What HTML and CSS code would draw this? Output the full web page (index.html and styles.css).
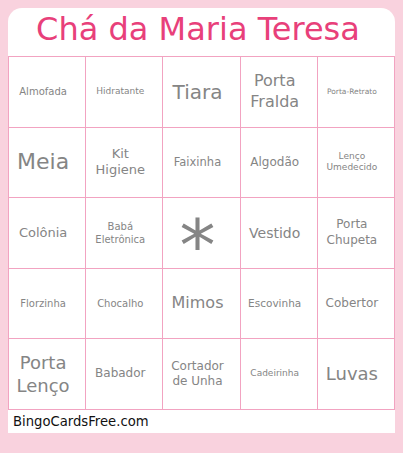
FILE: index.html
```html
<!DOCTYPE html>
<html lang="pt">
<head>
<meta charset="utf-8">
<title>Chá da Maria Teresa</title>
<link rel="stylesheet" href="styles.css">
</head>
<body>
<div class="card">
  <h1 class="title">Chá da Maria Teresa</h1>
  <div class="grid">
    <div class="cell s10">Almofada</div>
    <div class="cell s9">Hidratante</div>
    <div class="cell s20">Tiara</div>
    <div class="cell s16">Porta<br>Fralda</div>
    <div class="cell s7">Porta-Retrato</div>

    <div class="cell s22">Meia</div>
    <div class="cell s13">Kit<br>Higiene</div>
    <div class="cell s115">Faixinha</div>
    <div class="cell s12">Algodão</div>
    <div class="cell s9">Lenço<br>Umedecido</div>

    <div class="cell s13">Colônia</div>
    <div class="cell s10">Babá<br>Eletrônica</div>
    <div class="cell free">*</div>
    <div class="cell s14">Vestido</div>
    <div class="cell s12">Porta<br>Chupeta</div>

    <div class="cell s10">Florzinha</div>
    <div class="cell s10">Chocalho</div>
    <div class="cell s16">Mimos</div>
    <div class="cell s105">Escovinha</div>
    <div class="cell s12">Cobertor</div>

    <div class="cell s18">Porta<br>Lenço</div>
    <div class="cell s12">Babador</div>
    <div class="cell s12">Cortador<br>de Unha</div>
    <div class="cell s9">Cadeirinha</div>
    <div class="cell s18">Luvas</div>
  </div>
  <div class="footer">BingoCardsFree.com</div>
</div>
</body>
</html>
```

FILE: styles.css
```css
html, body {
  margin: 0;
  padding: 0;
}
body {
  background: #f9d2de;
  font-family: "DejaVu Sans", Verdana, sans-serif;
  padding: 8px;
}
.card {
  width: 387px;
  background: #ffffff;
  border-radius: 14px 14px 0 0;
}
.title {
  margin: 0;
  height: 48px;
  line-height: 43px;
  font-size: 32px;
  font-weight: normal;
  color: #e8407a;
  text-align: center;
  white-space: nowrap;
  padding-right: 7px;
}
.grid {
  display: grid;
  grid-template-columns: repeat(5, 1fr);
  grid-template-rows: repeat(5, 70.6px);
  border-top: 1px solid #f2a3c1;
  border-left: 1px solid #f2a3c1;
}
.cell {
  border-right: 1px solid #f2a3c1;
  border-bottom: 1px solid #f2a3c1;
  display: flex;
  align-items: center;
  justify-content: center;
  text-align: center;
  color: #858585;
  line-height: 1.3;
  padding-right: 8px;
}
.s7 { font-size: 7.5px; }
.s9 { font-size: 9px; }
.s10 { font-size: 10px; }
.s105 { font-size: 10.5px; }
.s115 { font-size: 11.5px; }
.s12 { font-size: 12px; }
.s13 { font-size: 13px; }
.s14 { font-size: 14px; }
.s16 { font-size: 16px; }
.s18 { font-size: 18px; }
.s20 { font-size: 20px; }
.s22 { font-size: 22px; }
.free {
  font-size: 72px;
  line-height: 1;
  padding-top: 24px;
}
.footer {
  height: 23px;
  line-height: 23px;
  padding-left: 5px;
  font-size: 13.2px;
  color: #111111;
}
```
